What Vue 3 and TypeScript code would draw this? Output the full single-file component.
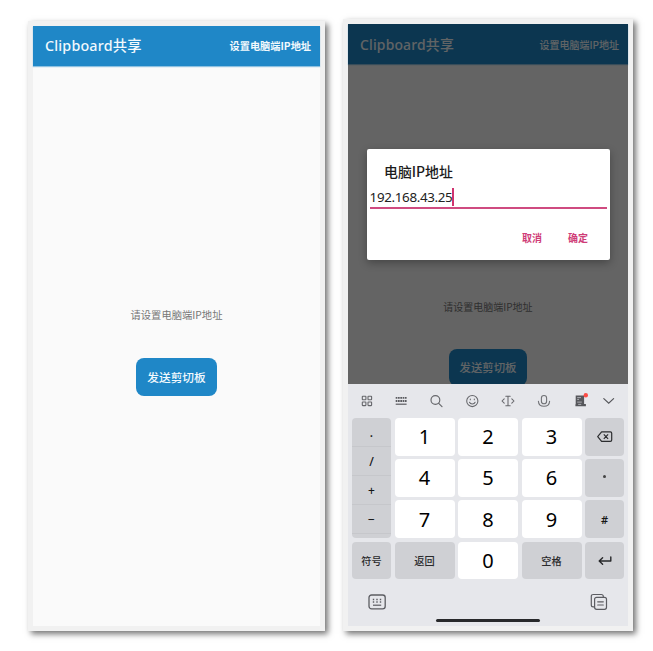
<script setup lang="ts">
const symbols: string[] = ['.', '/', '+', '−']
const digits: string[][] = [
  ['1', '2', '3'],
  ['4', '5', '6'],
  ['7', '8', '9'],
]
const ip: string = '192.168.43.25'
</script>

<template>
  <main class="stage">
    <section class="phone phone-left">
      <header class="bar">
        <h1 class="title">Clipboard<span class="han">共享</span></h1>
        <span class="action">设置电脑端IP地址</span>
      </header>
      <div class="body">
        <p class="hint">请设置电脑端IP地址</p>
        <button class="send">发送剪切板</button>
      </div>
    </section>

    <section class="phone phone-right">
      <header class="bar">
        <h1 class="title">Clipboard<span class="han">共享</span></h1>
        <span class="action">设置电脑端IP地址</span>
      </header>
      <div class="body">
        <p class="hint">请设置电脑端IP地址</p>
        <button class="send">发送剪切板</button>
      </div>

      <div class="scrim"></div>

      <div class="dialog">
        <h2 class="dialog-title">电脑IP地址</h2>
        <div class="field"><span class="ip">{{ ip }}</span><i class="caret"></i></div>
        <div class="buttons"><span>取消</span><span>确定</span></div>
      </div>

      <div class="keyboard">
        <div class="tools">
          <svg class="tool" viewBox="0 0 16 16"><g fill="none" stroke="#66676b" stroke-width="1.1"><rect x="3.3" y="3.2" width="3.6" height="3.6" rx=".5" /><rect x="9" y="3.2" width="3.6" height="3.6" rx=".5" /><rect x="3.3" y="9" width="3.6" height="3.6" rx=".5" /><rect x="9" y="9" width="3.6" height="3.6" rx=".5" /></g></svg>
          <svg class="tool" viewBox="0 0 16 16"><g fill="none" stroke="#5b5c60"><path d="M2.7 4.9h11M2.7 8h11" stroke-width="1.8" stroke-dasharray="1.7 .6" /><path d="M2.7 11.2h10.9" stroke-width="1.2" /></g></svg>
          <svg class="tool" viewBox="0 0 16 16"><g fill="none" stroke="#66676b" stroke-width="1.15" stroke-linecap="round"><circle cx="6.4" cy="7" r="4.4" /><path d="m9.7 10.3 3.3 3.3" /></g></svg>
          <svg class="tool" viewBox="0 0 16 16"><g fill="none" stroke="#66676b" stroke-width="1.05" stroke-linecap="round"><circle cx="8.3" cy="8" r="5.6" /><path d="M5.5 9.2c.9 2.3 4.7 2.3 5.6 0M6.3 6v.7M10.3 6v.7" /></g></svg>
          <svg class="tool" viewBox="0 0 16 16"><g fill="none" stroke="#66676b" stroke-width="1.05" stroke-linecap="round" stroke-linejoin="round"><path d="M5.8 3.2h4.4M8 3.2v9.6M5.8 12.8h4.4M4.2 5.8 2 8l2.2 2.2M11.8 5.8 14 8l-2.2 2.2" /></g></svg>
          <svg class="tool" viewBox="0 0 16 16"><g fill="none" stroke="#707175" stroke-width="1.1" stroke-linecap="round"><rect x="5.4" y="2.5" width="5.2" height="8.3" rx="2.6" /><path d="M2.4 8.2c.4 6.8 10.8 6.8 11.2 0" /></g></svg>
          <svg class="tool" viewBox="0 0 16 16"><path d="M3.7 2.4h8.4v8.6h1.8v2.2H3.4v-2h.3z" fill="#56575b" /><path d="M5.2 4.6H9M5.2 6.4H7M5.2 9.1h4.6M6.2 11.4h3" stroke="#b9babf" stroke-width=".9" /><circle cx="13.8" cy="2.2" r="2.2" fill="#fb4c45" /></svg>
          <svg class="tool" viewBox="0 0 16 16"><path d="m3.8 5.6 4.9 4.6 4.9-4.6" fill="none" stroke="#55565a" stroke-width="1.2" stroke-linecap="round" /></svg>
        </div>

        <div class="keys">
          <div class="key symbols">
            <span v-for="s in symbols" :key="s">{{ s }}</span>
          </div>
          <template v-for="(row, r) in digits" :key="r">
            <div v-for="d in row" :key="d" class="key digit">{{ d }}</div>
            <div class="key grey">
              <svg v-if="r === 0" class="glyph" viewBox="0 0 18 14"><path d="M5.6 1.8h8.7q1.4 0 1.4 1.4v6.8q0 1.4-1.4 1.4H5.6L1.7 6.6zM7.8 4.4l4.3 4.4m0-4.4L7.8 8.8" fill="none" stroke="#2c2d2f" stroke-width="1.2" stroke-linejoin="round" /></svg>
              <i v-else-if="r === 1" class="dot"></i>
              <span v-else class="hash">#</span>
            </div>
          </template>
          <div class="key grey word">符号</div>
          <div class="key grey word">返回</div>
          <div class="key digit">0</div>
          <div class="key grey word">空格</div>
          <div class="key grey">
            <svg class="glyph" viewBox="0 0 18 14"><path d="M14.8 4v4H3.4M6.6 4.7 3.2 8l3.4 3.3" fill="none" stroke="#27282a" stroke-width="1.4" stroke-linecap="round" stroke-linejoin="round" /></svg>
          </div>
        </div>

        <div class="foot">
          <svg class="foot-icon" viewBox="0 0 20 18"><rect x="2" y="2" width="16.2" height="13.8" rx="2.6" fill="none" stroke="#5c5d62" stroke-width="1.3" /><path d="M5.8 6.5h9M5.8 9h9" stroke="#5c5d62" stroke-width="1.3" stroke-dasharray="1.4 2.1" /><path d="M6 12.2h8.2" stroke="#5c5d62" stroke-width="1.2" /></svg>
          <svg class="foot-icon" viewBox="0 0 20 18"><g fill="none" stroke="#5c5d62" stroke-width="1.2" stroke-linecap="round"><path d="M5.3 13.9H4.2q-1.9 0-1.9-1.9V3.2q0-1.7 1.9-1.7h8.1q2 0 2 1.9v.8" /><rect x="5.6" y="4.3" width="11.9" height="12" rx="2" /><path d="M8.7 8.8h5.6M8.7 12h5.6" /></g></svg>
        </div>
        <div class="home"></div>
      </div>
    </section>
  </main>
</template>

<style>
body {
  margin: 0;
  background: #fff;
}
</style>

<style scoped>
* {
  box-sizing: border-box;
}

.stage {
  width: 653px;
  height: 651px;
  padding: 19px 20px 20px 28px;
  display: flex;
  align-items: flex-end;
  justify-content: space-between;
  font-family: "Noto Sans", "Noto Sans CJK SC", sans-serif;
  overflow: hidden;
}

.phone {
  border: 5px solid #f1f1f1;
  background: #fafafa;
  box-shadow: 3px 3px 6px rgba(0, 0, 0, 0.55);
  display: flex;
  flex-direction: column;
  position: relative;
}

.phone-left {
  width: 297px;
  height: 610px;
}

.phone-right {
  width: 290px;
  height: 612px;
}

.bar {
  height: 40px;
  flex: none;
  padding: 0 9px 0 12px;
  display: flex;
  align-items: center;
  justify-content: space-between;
  background: #1f87c7;
  color: #f2f9fd;
  box-shadow: 0 1px 1px rgba(31, 135, 199, 0.5);
}

.title {
  margin: 0;
  font-size: 14.3px;
  font-weight: 500;
  line-height: 20px;
  letter-spacing: 0.18px;
  white-space: nowrap;
}

.action {
  font-family: "Noto Sans CJK SC", sans-serif;
  font-size: 10.2px;
  font-weight: 700;
  line-height: 16px;
  white-space: nowrap;
}

.phone-right .bar {
  padding-top: 2px;
}

.phone-right .title {
  font-size: 13.9px;
}

.phone-right .action {
  font-size: 10px;
  font-weight: 500;
}

.body {
  flex: 1;
  display: flex;
  flex-direction: column;
  align-items: center;
  padding-top: 241px;
}

.hint {
  margin: 0;
  font-family: "Noto Sans CJK SC", sans-serif;
  font-size: 10.3px;
  line-height: 16px;
  color: #777;
}

.send {
  margin: 35px 0 0;
  width: 81px;
  height: 38px;
  padding: 0 0 1px;
  border: 0;
  border-radius: 8px;
  background: #1f87c7;
  color: #f2f9fd;
  font-family: "Noto Sans CJK SC", sans-serif;
  font-size: 11.7px;
  font-weight: 500;
}

.phone-right .body {
  padding-top: 235px;
}

.phone-right .hint {
  font-size: 10px;
}

.phone-right .send {
  margin-top: 34px;
  width: 78px;
  height: 37px;
  font-size: 11.4px;
}

.scrim {
  position: absolute;
  inset: 0;
  background: rgba(0, 0, 0, 0.6);
}

.dialog {
  position: absolute;
  left: 18.6px;
  top: 125px;
  width: 243px;
  height: 110.5px;
  padding: 12px 3px 0;
  border-radius: 2px;
  background: #fff;
  box-shadow: 0 3px 8px rgba(0, 0, 0, 0.3);
}

.dialog-title {
  margin: 0 0 0 14.4px;
  font-family: "Noto Sans CJK SC", sans-serif;
  font-size: 13.9px;
  font-weight: 500;
  line-height: 20px;
  color: #1c1c1c;
}

.field {
  height: 27.5px;
  display: flex;
  align-items: center;
  padding-top: 6px;
  border-bottom: 2px solid #cf4b80;
}

.ip {
  font-size: 13.4px;
  line-height: 18px;
  letter-spacing: -0.35px;
  color: #222;
}

.caret {
  width: 2px;
  height: 18px;
  background: #d0336f;
}

.buttons {
  display: flex;
  justify-content: flex-end;
  gap: 26px;
  padding: 21px 18.5px 0 0;
  font-family: "Noto Sans CJK SC", sans-serif;
  font-size: 10px;
  font-weight: 700;
  line-height: 16px;
  color: #cf3d78;
}

.keyboard {
  position: absolute;
  left: 0;
  right: 0;
  bottom: 0;
  height: 242.5px;
  padding: 0 4px;
  background: #e6e7eb;
}

.tools {
  height: 34.5px;
  display: flex;
  align-items: center;
  gap: 19.8px;
  padding: 0 7px;
}

.tool {
  width: 16px;
  height: 16px;
  flex: none;
  overflow: visible;
}

.tool:nth-child(2) {
  margin-left: -2px;
}

.tool:last-child {
  margin-left: -7.2px;
}

.keys {
  display: grid;
  grid-template-columns: 39px 60px 60px 60px 39px;
  grid-template-rows: repeat(4, 37.5px);
  column-gap: 3.5px;
  row-gap: 3.7px;
}

.key {
  border-radius: 4px;
  display: flex;
  align-items: center;
  justify-content: center;
  color: #161616;
}

.digit {
  padding-top: 1px;
  background: #fff;
  color: #000;
  font-size: 20px;
  font-weight: 400;
  line-height: 24px;
}

.grey,
.symbols {
  background: #cfd0d4;
}

.symbols {
  grid-row: 1 / span 3;
  flex-direction: column;
  justify-content: flex-start;
  overflow: hidden;
}

.symbols span {
  width: 100%;
  height: 29.1px;
  flex: none;
  border-bottom: 1px solid #c6c7cb;
  text-align: center;
  font-size: 12px;
  font-weight: 500;
  line-height: 30px;
}

.word {
  font-family: "Noto Sans CJK SC", sans-serif;
  font-size: 10.2px;
  font-weight: 500;
  color: #2a2a2c;
}

.hash {
  font-size: 11px;
  font-weight: 600;
}

.dot {
  width: 3px;
  height: 3px;
  margin-top: -2px;
  border-radius: 50%;
  background: #444;
}

.glyph {
  width: 18px;
  height: 14px;
}

.foot {
  height: 45px;
  padding: 0 15px;
  display: flex;
  align-items: center;
  justify-content: space-between;
}

.foot-icon {
  width: 20px;
  height: 18px;
}

.home {
  width: 104px;
  height: 2.5px;
  margin: -5px auto 0;
  border-radius: 2px;
  background: #28292b;
}
</style>
